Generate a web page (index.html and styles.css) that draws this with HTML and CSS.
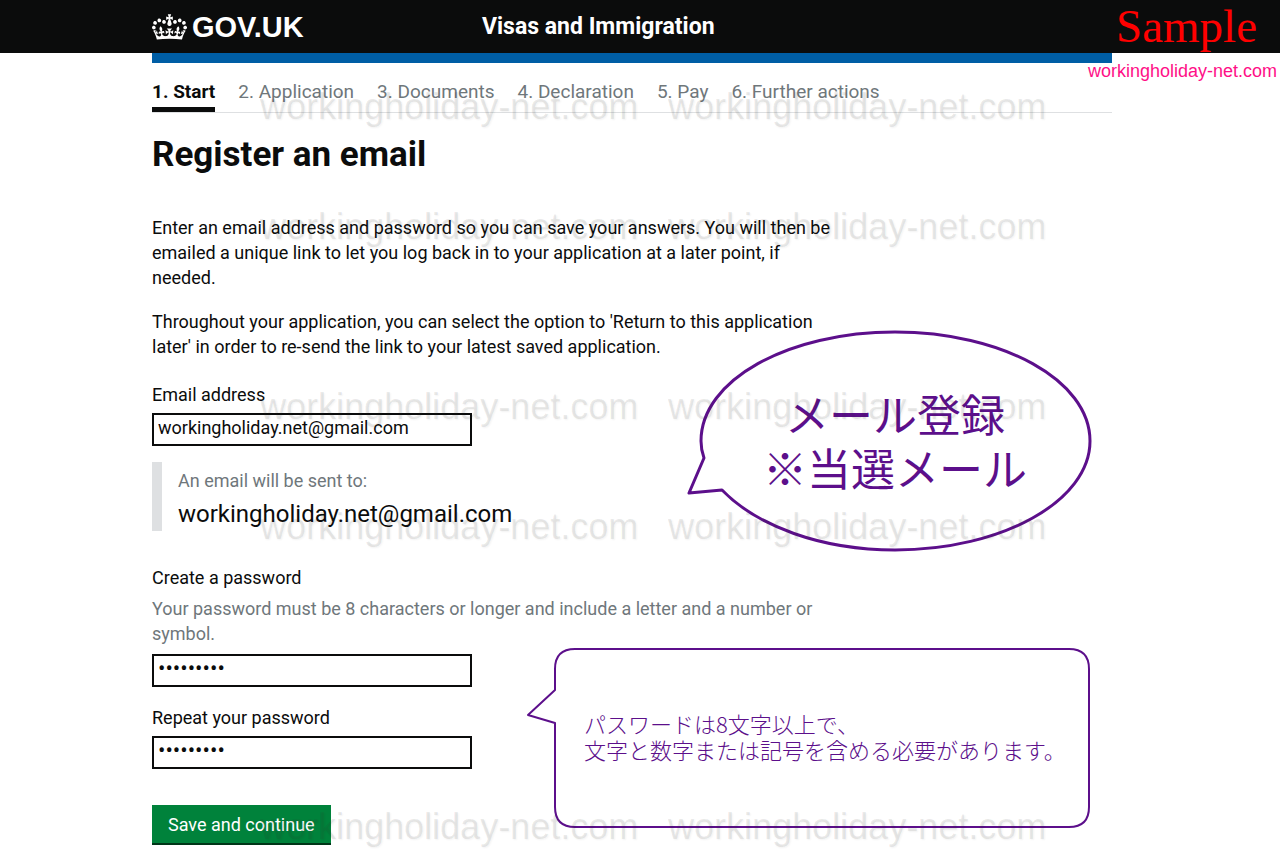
FILE: index.html
```html
<!DOCTYPE html>
<html lang="en">
<head>
    <meta charset="UTF-8">
    <meta name="viewport" content="width=device-width, initial-scale=1.0">
    <title>Register an email - Visas and Immigration</title>
    <link rel="stylesheet" href="styles.css">
</head>
<body>
    <header class="site-header">
        <div class="header-inner">
            <a href="#" class="logo">
                <svg class="crown" viewBox="0 0 132 97" aria-hidden="true">
                    <path d="M25 30.2c3.5 1.5 7.7-.2 9.1-3.7 1.5-3.6-.2-7.8-3.9-9.2-3.6-1.4-7.6.3-9.1 3.9-1.4 3.5.3 7.5 3.9 9zM9 39.5c3.6 1.5 7.8-.2 9.1-3.7 1.5-3.6-.2-7.8-3.9-9.1-3.6-1.5-7.6.3-9.1 3.8-1.4 3.5.3 7.5 3.9 9zM4.4 57.2c3.5 1.5 7.7-.2 9.1-3.8 1.5-3.6-.2-7.7-3.9-9.1-3.5-1.5-7.6.3-9.1 3.8-1.4 3.5.3 7.6 3.9 9.1zm38.3-21.4c3.5 1.5 7.7-.2 9.1-3.8 1.5-3.6-.2-7.7-3.9-9.1-3.6-1.5-7.6.3-9.1 3.8-1.3 3.6.4 7.7 3.9 9.1zm64.4-5.6c-3.6 1.5-7.8-.2-9.1-3.7-1.5-3.6.2-7.8 3.8-9.2 3.6-1.4 7.7.3 9.2 3.9 1.3 3.5-.4 7.5-3.9 9zm15.9 9.3c-3.6 1.5-7.7-.2-9.1-3.7-1.5-3.6.2-7.8 3.7-9.1 3.6-1.5 7.7.3 9.2 3.8 1.5 3.5-.3 7.5-3.8 9zm4.7 17.7c-3.6 1.5-7.8-.2-9.2-3.8-1.5-3.6.2-7.7 3.9-9.1 3.6-1.5 7.7.3 9.2 3.8 1.3 3.5-.4 7.6-3.9 9.1zM89.3 35.8c-3.6 1.5-7.8-.2-9.2-3.8-1.4-3.6.2-7.7 3.9-9.1 3.6-1.5 7.7.3 9.2 3.8 1.4 3.6-.3 7.7-3.9 9.1zM69.7 17.7l8.9 4.7V9.3l-8.9 2.8c-.2-.3-.5-.6-.9-.9L72.4 0H59.6l3.5 11.2c-.3.3-.6.5-.9.9l-8.8-2.8v13.1l8.8-4.7c.3.3.6.7.9.9l-5 15.4v.1c-.2.8-.4 1.6-.4 2.4 0 4.1 3.1 7.5 7 8.1h.2c.3 0 .7.1 1 .1.4 0 .7 0 1-.1h.2c4-.6 7.1-4.1 7.1-8.1 0-.8-.1-1.7-.4-2.4V34l-5.1-15.4c.4-.2.7-.6 1-.9zM66 92.8c16.9 0 32.8 1.1 47.1 3.2 4-16.9 8.9-26.7 14-33.5l-9.6-3.4c1 4.9 1.1 7.2 0 10.2-1.5-1.4-3-4.3-4.2-8.7L108.6 76c2.8-2 5-3.2 7.5-3.3-4.4 9.4-10 11.9-13.6 11.2-4.3-.8-6.3-4.6-5.6-7.9 1-4.7 5.7-5.9 8-.5 4.3-8.7-3-11.4-7.6-8.8 7.1-7.2 7.9-13.5 2.1-21.1-8 6.1-8.1 12.3-4.5 20.8-4.7-5.4-12.1-2.5-9.5 6.2 3.4-5.2 7.9-2 7.2 3.1-.6 4.3-6.4 7.8-13.5 7.2-10.3-.9-10.9-8-11.2-13.8 2.5-.5 7.1 1.8 11 7.3L80.2 60c-4.1 4.4-8 5.3-12.3 5.4 1.4-4.4 8-11.6 8-11.6H55.5s6.4 7.2 7.9 11.6c-4.2-.1-8-1-12.3-5.4l1.4 16.4c3.9-5.5 8.5-7.7 10.9-7.3-.3 5.8-.9 12.8-11.1 13.8-7.2.6-12.9-2.9-13.5-7.2-.7-5 3.8-8.3 7.1-3.1 2.7-8.7-4.6-11.6-9.4-6.2 3.7-8.5 3.6-14.7-4.6-20.8-5.8 7.6-5 13.9 2.2 21.1-4.7-2.6-11.9.1-7.7 8.8 2.3-5.5 7.1-4.2 8.1.5.7 3.3-1.3 7.1-5.7 7.9-3.5.7-9-1.8-13.5-11.2 2.5.1 4.7 1.3 7.5 3.3l-4.7-15.4c-1.2 4.4-2.7 7.2-4.3 8.7-1.1-3-.9-5.3 0-10.2l-9.5 3.4c5 6.9 9.9 16.7 14 33.5 14.8-2.1 30.8-3.2 47.7-3.2z"/>
                </svg>
                <span>GOV.UK</span>
            </a>
            <span class="service-name">Visas and Immigration</span>
        </div>
    </header>

    <div class="page">
        <main class="container">
            <ol class="steps">
                <li class="active">1. Start</li>
                <li>2. Application</li>
                <li>3. Documents</li>
                <li>4. Declaration</li>
                <li>5. Pay</li>
                <li>6. Further actions</li>
            </ol>

            <h1>Register an email</h1>

            <div class="content">
                <p>Enter an email address and password so you can save your answers. You will then be emailed a unique link to let you log back in to your application at a later point, if needed.</p>
                <p>Throughout your application, you can select the option to 'Return to this application later' in order to re-send the link to your latest saved application.</p>

                <form>
                    <div class="email-group">
                        <label for="email">Email address</label>
                        <input type="email" id="email" name="email" value="workingholiday.net@gmail.com">
                    </div>

                    <div class="inset">
                        <div class="hint">An email will be sent to:</div>
                        <div class="inset-email">workingholiday.net@gmail.com</div>
                    </div>

                    <div class="password-group">
                        <label for="password">Create a password</label>
                        <div class="hint" id="password-hint">Your password must be 8 characters or longer and include a letter and a number or symbol.</div>
                        <input type="password" id="password" name="password" value="password1" aria-describedby="password-hint">
                    </div>

                    <div class="repeat-group">
                        <label for="repeat-password">Repeat your password</label>
                        <input type="password" id="repeat-password" name="repeat-password" value="password1">
                    </div>

                    <button type="button">Save and continue</button>
                </form>
            </div>

            <!-- Speech bubbles over the form -->
            <div class="bubble bubble-round" lang="ja">
                <svg viewBox="0 0 408 226" aria-hidden="true">
                    <path d="M19 130 L4 165 L37 162 C72 198 136 222 210 222 C317 222 405 173 405 113 C405 52 317 4 210 4 C103 4 16 52 16 113 Q16 122 19 130 Z" stroke-width="3"/>
                </svg>
                <p>メール登録<br>※当選メール</p>
            </div>
            <div class="bubble bubble-box" lang="ja">
                <svg viewBox="0 0 564 180" aria-hidden="true">
                    <path d="M29 42 V21 Q29 1 49 1 H543 Q563 1 563 21 V159 Q563 179 543 179 H49 Q29 179 29 159 V75 L2 67 Z" stroke-width="2"/>
                </svg>
                <p>パスワードは8文字以上で、<br>文字と数字または記号を含める必要があります。</p>
            </div>

            <div class="watermark" aria-hidden="true">
                <span>workingholiday-net.com</span><span>workingholiday-net.com</span>
                <span>workingholiday-net.com</span><span>workingholiday-net.com</span>
                <span class="gap">workingholiday-net.com</span><span class="gap">workingholiday-net.com</span>
                <span>workingholiday-net.com</span><span>workingholiday-net.com</span>
                <span class="last">workingholiday-net.com</span><span class="last">workingholiday-net.com</span>
            </div>
        </main>
    </div>

    <div class="sample">
        <div class="sample-title">Sample</div>
        <div class="sample-site">workingholiday-net.com</div>
    </div>
</body>
</html>
```
FILE: styles.css
```css
* {
    box-sizing: border-box;
}
body {
    margin: 0;
    position: relative;
    font-family: Roboto, sans-serif;
    font-size: 18px;
    line-height: 25px;
    color: #0b0c0c;
    background: #fff;
}
.site-header {
    padding-right: 16px;
    background: #0b0c0c;
    color: #fff;
}
.header-inner {
    max-width: 960px;
    min-height: 53px;
    margin: 0 auto;
    display: grid;
    grid-template-columns: 330px 1fr;
    align-items: center;
}
.logo {
    display: flex;
    align-items: center;
    gap: 5px;
    color: #fff;
    text-decoration: none;
    font: bold 29px/32px "Liberation Sans", sans-serif;
}
.crown {
    width: 35px;
    height: 26px;
    fill: #fff;
}
.service-name {
    font-size: 23px;
    font-weight: bold;
}
.page {
    padding-right: 16px;
}
.container {
    position: relative;
    max-width: 960px;
    margin: 0 auto;
    padding-bottom: 15px;
    border-top: 10px solid #005ea5;
}
.steps {
    display: flex;
    gap: 23px;
    margin: 0;
    padding: 16px 0 0;
    list-style: none;
    font-size: 19px;
    color: #6f777b;
    border-bottom: 1px solid #dee0e2;
}
.steps li {
    padding-bottom: 3px;
    border-bottom: 5px solid transparent;
}
.steps .active {
    color: #0b0c0c;
    font-weight: bold;
    border-bottom-color: #0b0c0c;
}
h1 {
    margin: 22px 0 40px;
    font-size: 35px;
    line-height: 40px;
}
.content {
    max-width: 690px;
}
.content p {
    margin: 0 0 19px;
}
form {
    padding-top: 4px;
}
label {
    display: block;
    margin-bottom: 6px;
}
.hint {
    color: #6f777b;
}
input {
    display: block;
    width: 320px;
    height: 33px;
    padding: 0 4px 4px;
    border: 2px solid #0b0c0c;
    border-radius: 0;
    background: #fff;
    color: #0b0c0c;
    font: inherit;
}
input[type="password"] {
    font-size: 22px;
}
.inset {
    margin: 16px 0 34px;
    padding: 6px 0 2px 16px;
    border-left: 10px solid #dee0e2;
}
.inset-email {
    margin-top: 6px;
    font-size: 24px;
    line-height: 30px;
}
.password-group .hint {
    margin-bottom: 8px;
}
.repeat-group {
    margin: 18px 0 36px;
}
button {
    height: 38px;
    padding: 0 16px;
    border: none;
    border-radius: 0;
    background: #00823b;
    box-shadow: 0 2px 0 #003618;
    color: #fff;
    font: inherit;
    cursor: pointer;
}
.bubble {
    position: absolute;
    display: flex;
    align-items: center;
    color: #5c0f8b;
    font-family: "Noto Sans CJK JP", sans-serif;
}
.bubble svg {
    position: absolute;
    inset: 0;
    width: 100%;
    height: 100%;
    fill: none;
    stroke: #5c0f8b;
    stroke-linejoin: round;
}
.bubble p {
    margin: 0;
}
.bubble-round {
    top: 265px;
    right: 19px;
    width: 408px;
    height: 226px;
    justify-content: center;
    padding: 0 0 2px 12px;
    font-size: 44px;
    line-height: 54px;
    text-align: center;
}
.bubble-box {
    top: 585px;
    right: 22px;
    width: 564px;
    height: 180px;
    padding: 0 0 4px 58px;
    font-size: 22px;
    font-weight: 300;
    line-height: 26px;
}
/* repeated site name across the page */
.watermark {
    position: absolute;
    top: 24px;
    left: 108px;
    display: grid;
    grid-template-columns: 376px 376px;
    grid-auto-rows: min-content;
    column-gap: 32px;
    font: 36px/40px "Liberation Sans", sans-serif;
    white-space: nowrap;
    color: rgba(60, 60, 50, 0.1);
    text-shadow: 1px 1px 2px rgba(0, 0, 0, 0.05);
    pointer-events: none;
}
.watermark span {
    padding-bottom: 80px;
}
.watermark .gap {
    padding-top: 60px;
}
.watermark .last {
    padding-top: 180px;
    padding-bottom: 0;
}
.sample {
    position: absolute;
    top: 0;
    right: 3px;
    text-align: right;
}
.sample-title {
    padding-right: 20px;
    font: 47px/52px "Liberation Serif", serif;
    color: #f00;
}
.sample-site {
    margin-top: 7px;
    font: 18px/25px "Liberation Sans", sans-serif;
    color: #ff0f87;
}
```
